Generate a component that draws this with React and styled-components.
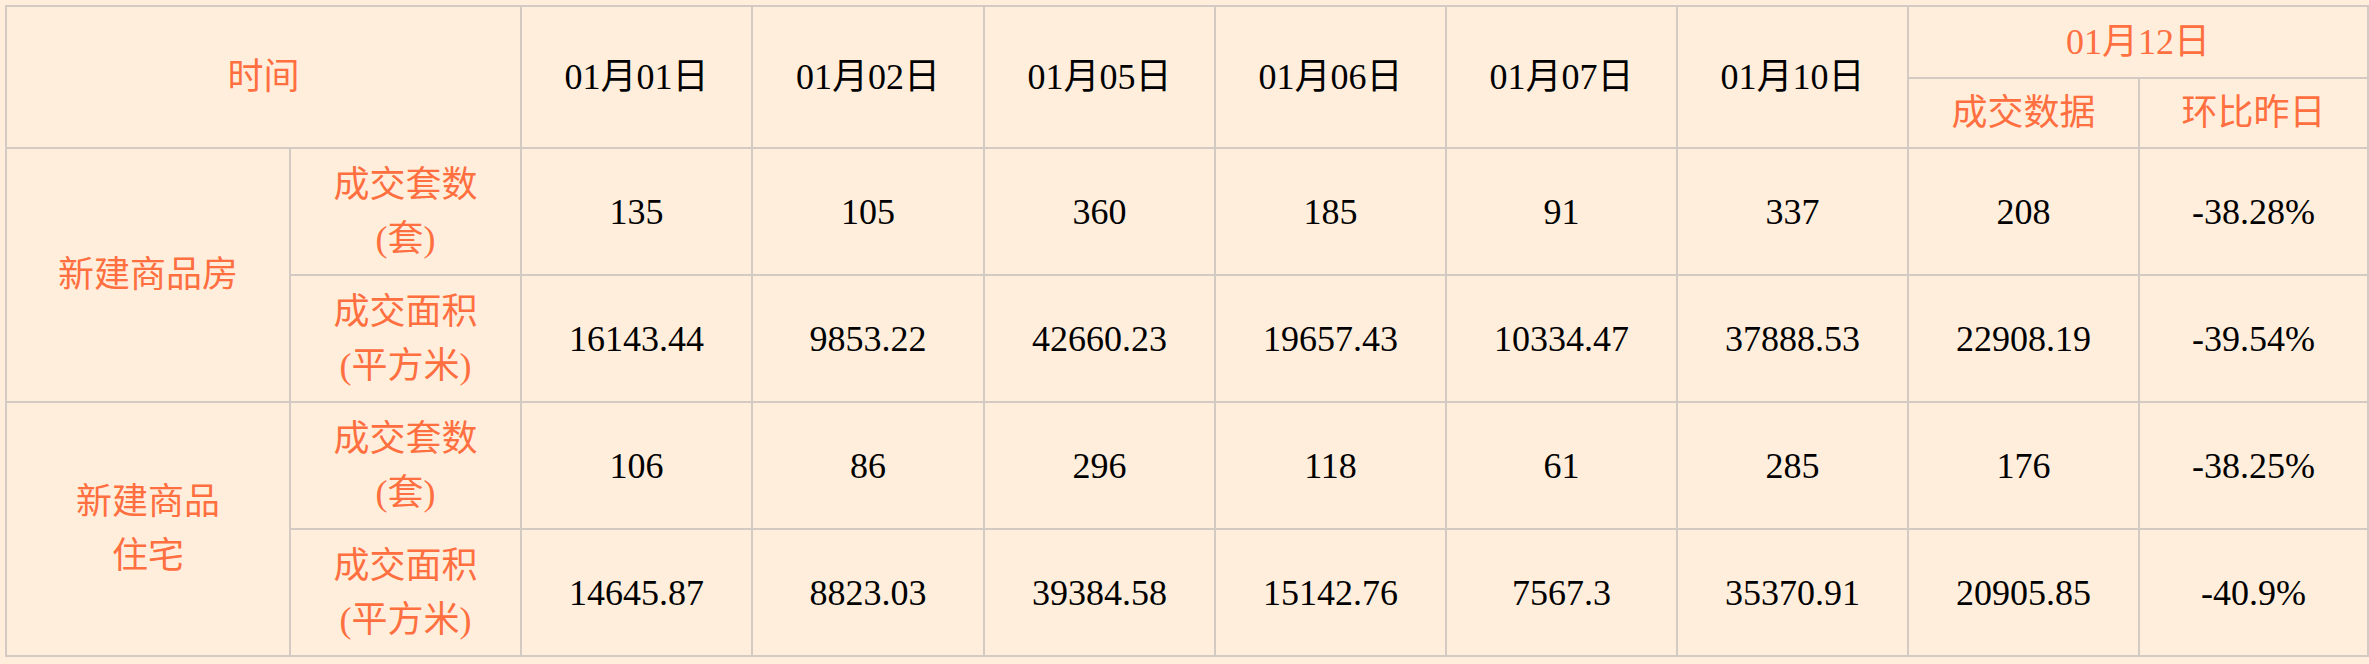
import React from "react";
import styled, { createGlobalStyle } from "styled-components";

const GlobalStyle = createGlobalStyle`
  html, body {
    margin: 0;
    padding: 0;
    background: #ffeedc;
  }
  body {
    font-family: "Liberation Serif", "Noto Sans CJK SC", serif;
  }
`;

const Page = styled.div`
  padding: 5px 3px 8px 5px;
  background: #ffeedc;
`;

const Table = styled.table`
  width: 2361px;
  table-layout: fixed;
  border-collapse: collapse;
  background: #ffeedc;
  font-family: "Liberation Serif", "Noto Sans CJK SC", serif;
  font-size: 36px;
  line-height: 54px;
`;

const Row = styled.tr`
  height: ${(p) => p.$h}px;
`;

const Cell = styled.td`
  border: 2px solid #d3cac4;
  text-align: center;
  vertical-align: middle;
  padding: 0 ${(p) => p.$pad ?? 40}px;
  color: ${(p) => (p.$accent ? "#ff6f3f" : "#000")};
  font-weight: normal;
`;

const HeadCell = styled(Cell).attrs({ as: "th" })``;

const NameLine = styled.span`
  display: block;
`;

const colWidths = [284, 231, 231, 232, 231, 231, 231, 231, 231, 229];

const dates = ["01月01日", "01月02日", "01月05日", "01月06日", "01月07日", "01月10日"];

const groups = [
  {
    name: ["新建商品房"],
    rows: [
      { label: "成交套数(套)", values: ["135", "105", "360", "185", "91", "337", "208", "-38.28%"] },
      { label: "成交面积(平方米)", values: ["16143.44", "9853.22", "42660.23", "19657.43", "10334.47", "37888.53", "22908.19", "-39.54%"] },
    ],
  },
  {
    name: ["新建商品", "住宅"],
    rows: [
      { label: "成交套数(套)", values: ["106", "86", "296", "118", "61", "285", "176", "-38.25%"] },
      { label: "成交面积(平方米)", values: ["14645.87", "8823.03", "39384.58", "15142.76", "7567.3", "35370.91", "20905.85", "-40.9%"] },
    ],
  },
];

export default function App() {
  return (
    <>
      <GlobalStyle />
      <Page>
        <Table>
          <colgroup>
            {colWidths.map((w, i) => (
              <col key={i} style={{ width: w }} />
            ))}
          </colgroup>
          <thead>
            <Row $h={72}>
              <HeadCell colSpan={2} rowSpan={2} $accent>
                时间
              </HeadCell>
              {dates.map((d) => (
                <HeadCell key={d} rowSpan={2} $pad={10}>
                  {d}
                </HeadCell>
              ))}
              <HeadCell colSpan={2} $accent $pad={10}>
                01月12日
              </HeadCell>
            </Row>
            <Row $h={70}>
              <HeadCell $accent $pad={10}>成交数据</HeadCell>
              <HeadCell $accent $pad={10}>环比昨日</HeadCell>
            </Row>
          </thead>
          <tbody>
            {groups.map((g) =>
              g.rows.map((r, ri) => (
                <Row $h={127} key={g.name.join("") + ri}>
                  {ri === 0 && (
                    <Cell rowSpan={2} $accent $pad={20}>
                      {g.name.map((n) => (
                        <NameLine key={n}>{n}</NameLine>
                      ))}
                    </Cell>
                  )}
                  <Cell $accent $pad={40}>{r.label}</Cell>
                  {r.values.map((v, vi) => (
                    <Cell key={vi} $pad={6}>
                      {v}
                    </Cell>
                  ))}
                </Row>
              ))
            )}
          </tbody>
        </Table>
      </Page>
    </>
  );
}
